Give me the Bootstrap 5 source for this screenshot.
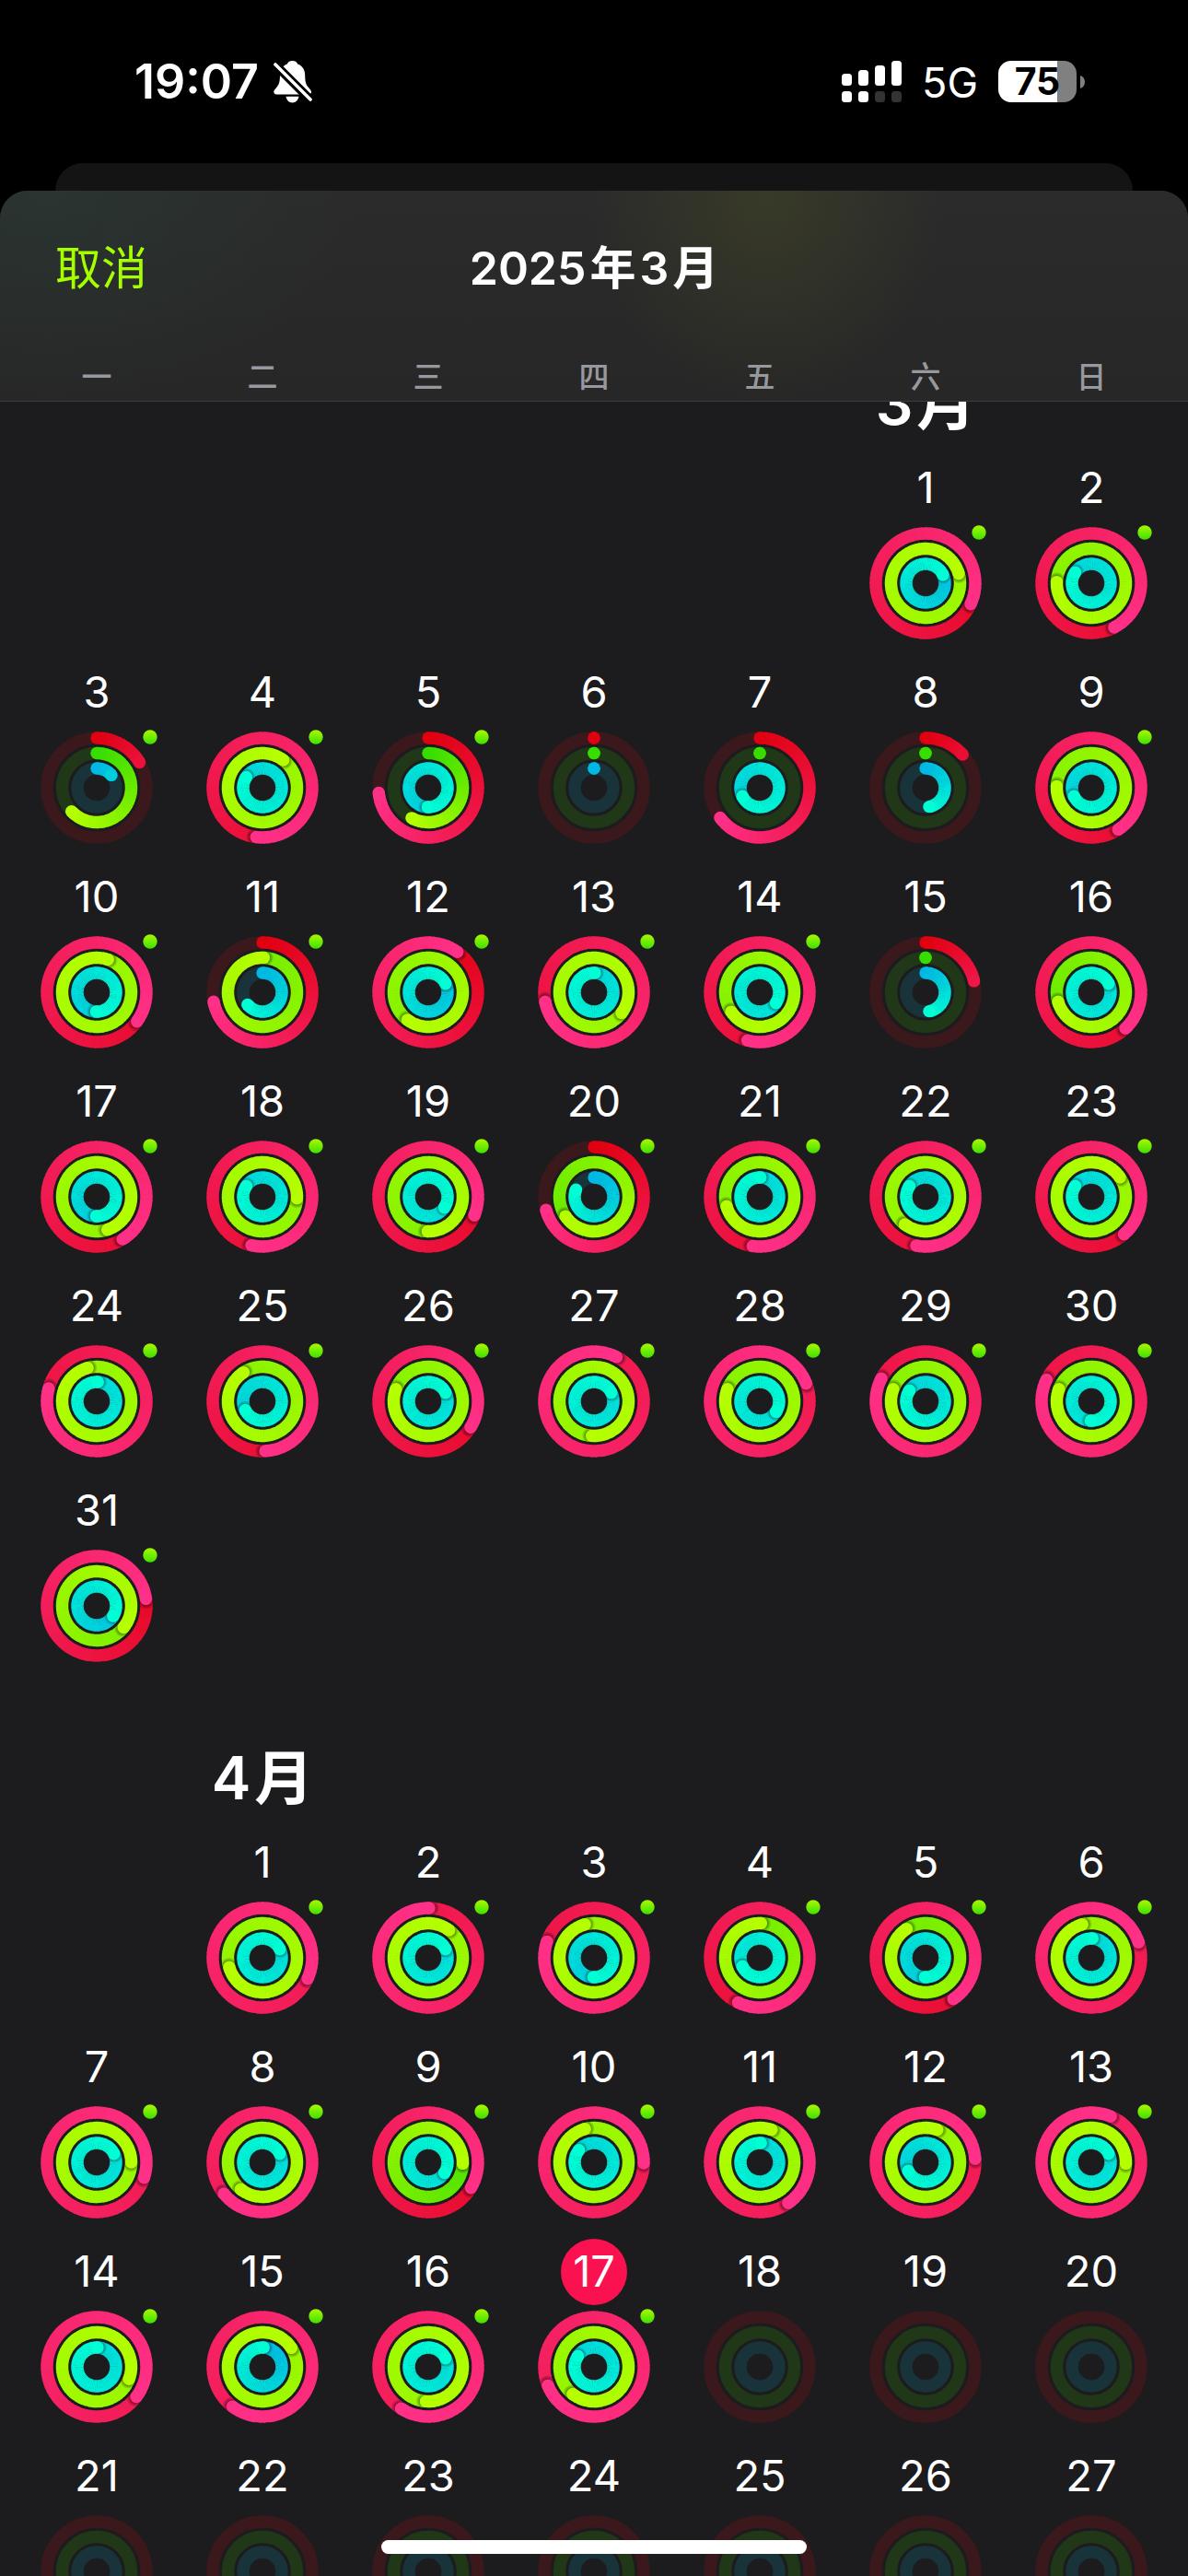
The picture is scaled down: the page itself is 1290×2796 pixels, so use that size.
<!DOCTYPE html>
<html lang="zh-CN">
<head>
<meta charset="utf-8">
<meta name="viewport" content="width=device-width, initial-scale=1">
<title>2025年3月</title>
<link href="https://cdn.jsdelivr.net/npm/bootstrap@5.3.0/dist/css/bootstrap.min.css" rel="stylesheet">
<style>
  body { font-family: Inter, "Noto Sans CJK SC", sans-serif; background: #000; color: #fff; }
  .status { height: 177px; padding: 0 112px 0 146px; }
  .clock { font-size: 52px; font-weight: 600; line-height: 60px; }
  .net { font-size: 45px; font-weight: 400; line-height: 60px; margin: 0 22px; padding-top: 2px; }
  .battery { width: 85px; height: 45px; border-radius: 14px; background: linear-gradient(90deg, #fff 75%, #808080 75%); }
  .battery-text { font-size: 41px; font-weight: 700; line-height: 45px; color: #000; }
  .behind { height: 30px; margin: 0 60px; border-radius: 30px 30px 0 0; background: #141414; }
  .sheet { border-radius: 30px 30px 0 0; background: #1c1c1e; min-height: 0; }
  .sheet-head {
    border-bottom: 1px solid #3d3d3f;
    background:
      radial-gradient(ellipse 190px 220px at 64.5% 4%, rgba(72, 76, 36, .45), transparent),
      radial-gradient(ellipse 330px 230px at 4% 0, rgba(40, 66, 56, .4), transparent),
      linear-gradient(#2b2b2b, #272727);
  }
  .bar { height: 168px; padding: 0 60px; }
  .bar-text { font-size: 50px; line-height: 60px; }
  .cancel { color: #a6ff00; }
  .seven { display: grid; grid-template-columns: repeat(7, 1fr); padding: 0 15px; }
  .weekdays { height: 60px; font-size: 33px; line-height: 60px; padding-top: 4px; font-weight: 500; color: #98989f; }
  .calendar { overflow-y: auto; scrollbar-width: none; min-height: 0; }
  .month-name { height: 160px; font-size: 64px; font-weight: 600; line-height: 80px; padding-bottom: 16px; }
  .day { margin-bottom: 22px; gap: 6px; color: inherit; }
  .date { min-width: 72px; height: 72px; font-size: 47px; line-height: 70px; }
  .today { background: #fa114f; }
  .rings { overflow: visible; }
  .home { width: 462px; height: 15px; bottom: 24px; background: #fff; }
</style>
</head>
<body class="vh-100 overflow-hidden d-flex flex-column position-relative">

<div class="status flex-shrink-0 d-flex align-items-center justify-content-between">
  <div class="d-flex align-items-center gap-3">
    <span class="clock">19:07</span>
    <svg width="42" height="46" viewBox="0 0 42 46" role="img" aria-label="静音">
      <path fill="#fff" d="M20.500 0c-3.400 0-5 1.700-5.600 3.400C9.500 5.200 7 10 7 15.500c0 8-1.400 11.200-4.400 14.200C1 31.400.3 32.600.3 33.800.3 35.400 1.500 36.500 3.400 36.500H38c1.800 0 3-1 3-2.700 0-1.200-.8-2.300-2.300-4C35.700 26.600 34.200 24 34.200 15.500c0-5.500-2.600-10.300-8-12.100C25.600 1.700 24 0 20.500 0zM13.500 38.800h14c-.8 4.300-3.600 6.700-7 6.700s-6.200-2.400-7-6.700z"/>
      <path stroke="#000" stroke-width="9.500" d="M-1 1.300 43 45.300"/>
      <path stroke="#fff" stroke-width="3.600" stroke-linecap="round" d="M2 4 40 42"/>
    </svg>
  </div>
  <div class="d-flex align-items-center">
    <svg width="65" height="45" viewBox="0 0 65 45" fill="#fff" role="img" aria-label="信号">
      <rect x="0" y="14" width="11" height="13" rx="3.500"/><rect x="18" y="10" width="11" height="17" rx="3.500"/>
      <rect x="36" y="5" width="11" height="22" rx="3.500"/><rect x="54" y="0" width="11" height="27" rx="3.500"/>
      <rect x="0" y="33" width="11" height="12" rx="3.500"/><rect x="18" y="33" width="11" height="12" rx="3.500"/>
      <rect x="36" y="33" width="11" height="12" rx="3.500" fill="#333"/><rect x="54" y="33" width="11" height="12" rx="3.500" fill="#333"/>
    </svg>
    <span class="net">5G</span>
    <span class="battery battery-text text-center">75</span>
    <svg class="ms-1" width="5" height="14" viewBox="0 0 5 14"><path fill="#808080" d="M0 0c3 1 5 3.500 5 7s-2 6-5 7z"/></svg>
  </div>
</div>

<div class="behind flex-shrink-0"></div>

<main class="sheet flex-fill d-flex flex-column overflow-hidden">
  <header class="sheet-head flex-shrink-0">
    <div class="bar row g-0 align-items-center">
      <div class="col"><button type="button" class="btn p-0 border-0 bar-text cancel">取消</button></div>
      <h1 class="col-auto m-0 bar-text fw-semibold">2025<span class="mx-1">年</span>3<span class="ms-1">月</span></h1>
      <div class="col"></div>
    </div>
    <div class="seven weekdays text-center">
      <span>一</span><span>二</span><span>三</span><span>四</span><span>五</span><span>六</span><span>日</span>
    </div>
  </header>
  <div class="calendar flex-fill" id="calendar"></div>
</main>

<div class="home position-absolute start-50 translate-middle-x rounded-pill"></div>

<script src="https://cdn.jsdelivr.net/npm/bootstrap@5.3.0/dist/js/bootstrap.bundle.min.js"></script>
<script>
  // Each day: [move, exercise, stand, workout]; ring values are in turns, 1 = goal reached.
  const months = [
    { number: 3, first: 6, days: [
      [1.319, 4.206, 1.180, 1], [1.424, 2.756, 1.844, 1],
      [.165, .630, .138, 1], [1.520, 4.103, 1.842, 1], [.734, .580, 1.505, 1], [0, 0, 0, 0], [.647, 0, 1.678, 0], [.134, 0, .470, 0], [1.409, 2.757, 1.678, 1],
      [1.350, 4.053, 1.505, 1], [.720, 2.006, .640, 1], [1.100, 2.603, 1.178, 1], [1.720, 4.353, 2.008, 1], [1.540, 2.655, 2.344, 1], [.214, 0, .470, 0], [1.380, 1.706, 2.178, 0],
      [1.413, 3.450, 1.505, 1], [1.536, 3.258, 1.844, 1], [1.311, 2.503, 2.344, 1], [.708, 1.655, .810, 1], [1.523, 2.706, 2.006, 1], [1.530, 3.603, 1.844, 1], [1.386, 4.156, 1.844, 1],
      [1.792, 3.958, 2.010, 1], [1.491, 2.908, 1.675, 1], [1.338, 2.808, 2.178, 1], [2.075, 3.510, 2.178, 1], [2.192, 2.808, 2.342, 1], [1.826, 2.808, 1.844, 1], [1.822, 2.808, 2.505, 1],
      [1.228, 2.358, 1.339, 1]
    ] },
    { number: 4, first: 2, days: [
      [2.319, 3.706, 2.178, 1], [2.003, 4.103, 2.178, 1], [1.803, 3.958, 1.505, 1], [1.572, 2.006, 2.678, 1], [1.406, 1.908, 1.505, 1], [2.200, 3.958, 2.010, 1],
      [2.300, 4.250, 2.178, 1], [2.642, 3.608, 2.178, 1], [1.336, 1.256, 2.342, 1], [2.253, 3.958, 1.858, 1], [2.403, 4.056, 2.010, 1], [2.239, 4.056, 1.678, 1], [3.064, 4.256, 2.178, 1],
      [2.353, 4.308, 2.008, 1], [2.603, 4.158, 1.010, 1], [2.592, 4.511, 2.178, 1], [2.689, 3.606, 1.844, 1], null, null, null,
      null, null, null, null, null, null, null
    ] }
  ];
  const today = { month: 4, day: 17 };

  const ringTypes = [
    { r: 54, from: [224, 0, 16], to: [255, 48, 136], track: '#3a181c' },
    { r: 37.5, from: [55, 221, 0], to: [182, 255, 0], track: '#213818' },
    { r: 21, from: [0, 184, 228], to: [0, 255, 213], track: '#18333a' }
  ];
  const W = 13.4;

  const point = (r, deg) => {
    const a = deg * Math.PI / 180;
    return (r * Math.sin(a)).toFixed(2) + ' ' + (-r * Math.cos(a)).toFixed(2);
  };
  const colour = (t, k) => 'rgb(' + t.from.map((c, i) => Math.round(c + (t.to[i] - c) * k)).join(',') + ')';
  const cap = (t, deg, fill) => {
    const p = point(t.r, deg).split(' ');
    return `<circle cx="${p[0]}" cy="${p[1]}" r="${W / 2}" fill="${fill}"/>`;
  };

  function ring(t, value, index) {
    if (value === null) return `<circle r="${t.r}" fill="none" stroke="${t.track}" stroke-width="${W}"/>`;
    const end = value * 360;
    const start = Math.max(0, end - 360);
    const reach = Math.min(1, value * 2.2); // short arcs stop before the full head colour
    let s = '';
    if (value < 1) s += `<circle r="${t.r}" fill="none" stroke="${t.track}" stroke-width="${W}"/>` + cap(t, 0, colour(t, 0));
    const n = Math.ceil((end - start) / 5);
    const step = (end - start) / n;
    for (let i = 0; i < n; i++) {
      // The head casts its shadow on the start of the band, below its own last stretch.
      if (value > 1 && i === n - 7) {
        const p = point(t.r, end + 2).split(' ');
        s += `<g clip-path="url(#band${index})"><circle cx="${p[0]}" cy="${p[1]}" r="9.500" fill="url(#shade)"/></g>`;
      }
      const a = start + i * step;
      const b = Math.min(end, a + step + 1);
      s += `<path d="M${point(t.r, a)}A${t.r} ${t.r} 0 0 1 ${point(t.r, b)}" fill="none" stroke="${colour(t, reach * (a + step / 2) / end)}" stroke-width="${W}"/>`;
    }
    return s + cap(t, end, colour(t, reach));
  }

  const band = (r, i) => {
    const o = r + W / 2, q = r - W / 2;
    return `<clipPath id="band${i}"><path clip-rule="evenodd" d="M0 ${-o}A${o} ${o} 0 1 1 0 ${o}A${o} ${o} 0 1 1 0 ${-o}zM0 ${-q}A${q} ${q} 0 1 1 0 ${q}A${q} ${q} 0 1 1 0 ${-q}z"/></clipPath>`;
  };
  const defs = `<svg class="position-absolute" width="0" height="0"><defs>
    <linearGradient id="dot" x2="0" y2="1"><stop stop-color="#a8f800"/><stop offset="1" stop-color="#3fe000"/></linearGradient>
    <radialGradient id="shade"><stop offset=".55" stop-color="#000" stop-opacity=".42"/><stop offset="1" stop-color="#000" stop-opacity="0"/></radialGradient>
    ${ringTypes.map((t, i) => band(t.r, i)).join('')}</defs></svg>`;

  const monthHtml = m => `<section>
    <div class="seven"><h2 class="month-name m-0 d-flex align-items-end justify-content-center text-nowrap" style="grid-column:${m.first}">${m.number}<span class="ms-1">月</span></h2></div>
    <div class="seven">${m.days.map((d, i) => `
      <button type="button" class="day btn p-0 border-0 d-flex flex-column align-items-center"${i ? '' : ` style="grid-column:${m.first}"`}>
        <span class="date rounded-circle${m.number === today.month && i + 1 === today.day ? ' today' : ''}">${i + 1}</span>
        <svg class="rings" width="122" height="122" viewBox="-61 -61 122 122" aria-hidden="true">${ringTypes.map((t, k) => ring(t, d ? d[k] : null, k)).join('')}${d && d[3] ? '<circle cx="58" cy="-55" r="7.700" fill="url(#dot)"/>' : ''}</svg>
      </button>`).join('')}</div>
  </section>`;

  const calendar = document.getElementById('calendar');
  calendar.innerHTML = defs + months.map(monthHtml).join('');
  calendar.scrollTop = 102;
</script>
</body>
</html>
